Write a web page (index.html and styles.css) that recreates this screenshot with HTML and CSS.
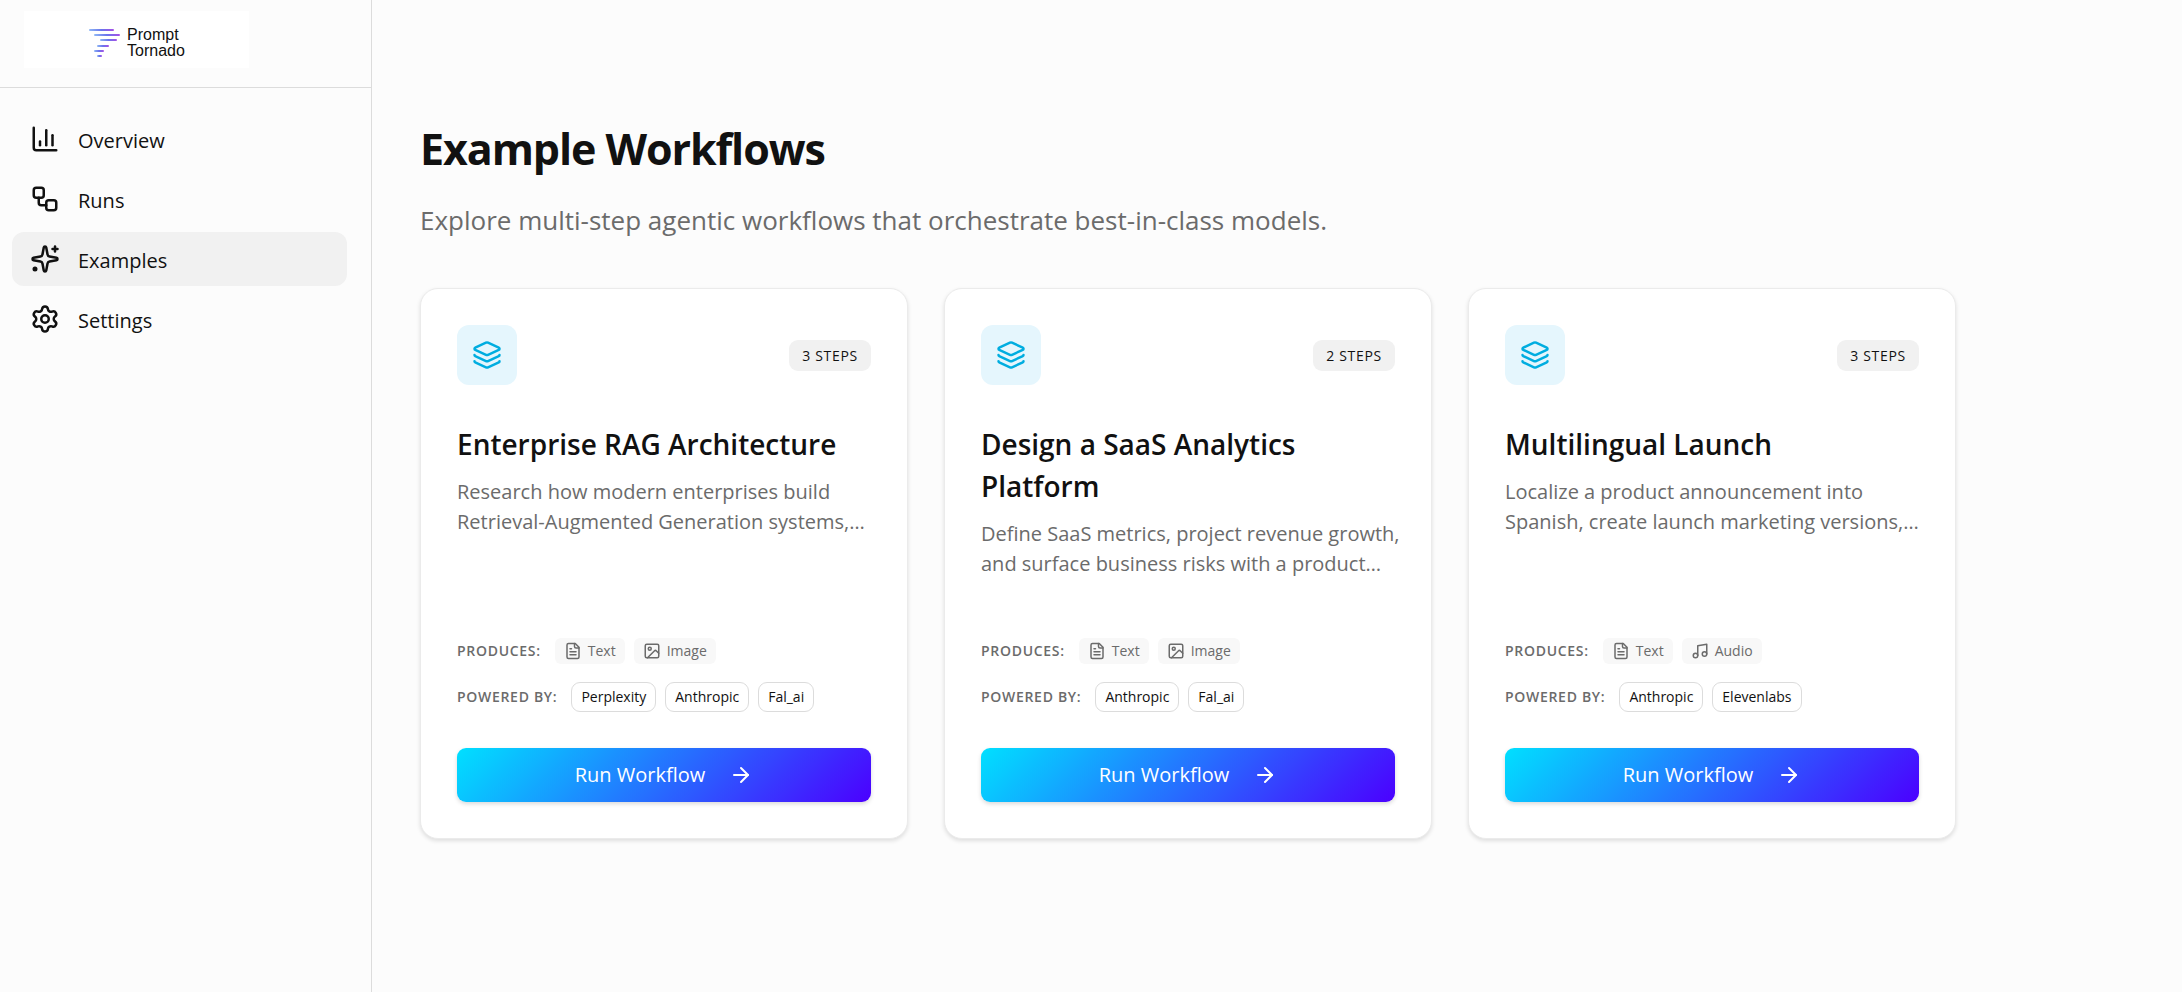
FILE: index.html
```
<!DOCTYPE html>
<html lang="en">
<head>
    <meta charset="UTF-8">
    <meta name="viewport" content="width=device-width, initial-scale=1.0">
    <title>Prompt Tornado - Example Workflows</title>
    <link rel="stylesheet" href="styles.css">
</head>
<body>
    <!-- Icon sprite -->
    <svg class="sprite" aria-hidden="true">
        <symbol id="icon-chart" viewBox="0 0 24 24">
            <path d="M3 3v16a2 2 0 0 0 2 2h16"/>
            <path d="M8 17v-3"/>
            <path d="M13 17V5"/>
            <path d="M18 17V9"/>
        </symbol>
        <symbol id="icon-workflow" viewBox="0 0 24 24">
            <rect width="8" height="8" x="3" y="3" rx="2"/>
            <path d="M7 11v4a2 2 0 0 0 2 2h4"/>
            <rect width="8" height="8" x="13" y="13" rx="2"/>
        </symbol>
        <symbol id="icon-sparkles" viewBox="0 0 24 24">
            <path d="M11.017 2.814a1 1 0 0 1 1.966 0l1.051 5.558a2 2 0 0 0 1.594 1.594l5.558 1.051a1 1 0 0 1 0 1.966l-5.558 1.051a2 2 0 0 0-1.594 1.594l-1.051 5.558a1 1 0 0 1-1.966 0l-1.051-5.558a2 2 0 0 0-1.594-1.594l-5.558-1.051a1 1 0 0 1 0-1.966l5.558-1.051a2 2 0 0 0 1.594-1.594z"/>
            <path d="M20 2v4"/>
            <path d="M22 4h-4"/>
            <circle cx="4" cy="20" r="1"/>
        </symbol>
        <symbol id="icon-settings" viewBox="0 0 24 24">
            <path d="M9.671 4.136a2.34 2.34 0 0 1 4.659 0 2.34 2.34 0 0 0 3.319 1.915 2.34 2.34 0 0 1 2.33 4.033 2.34 2.34 0 0 0 0 3.831 2.34 2.34 0 0 1-2.33 4.033 2.34 2.34 0 0 0-3.319 1.915 2.34 2.34 0 0 1-4.659 0 2.34 2.34 0 0 0-3.32-1.915 2.34 2.34 0 0 1-2.33-4.033 2.34 2.34 0 0 0 0-3.831A2.34 2.34 0 0 1 6.35 6.051a2.34 2.34 0 0 0 3.319-1.915"/>
            <circle cx="12" cy="12" r="3"/>
        </symbol>
        <symbol id="icon-layers" viewBox="0 0 24 24">
            <path d="M12.83 2.18a2 2 0 0 0-1.66 0L2.6 6.08a1 1 0 0 0 0 1.83l8.58 3.91a2 2 0 0 0 1.66 0l8.58-3.9a1 1 0 0 0 0-1.83z"/>
            <path d="M2 12a1 1 0 0 0 .58.91l8.6 3.91a2 2 0 0 0 1.65 0l8.58-3.9A1 1 0 0 0 22 12"/>
            <path d="M2 17a1 1 0 0 0 .58.91l8.6 3.91a2 2 0 0 0 1.65 0l8.58-3.9A1 1 0 0 0 22 17"/>
        </symbol>
        <symbol id="icon-text" viewBox="0 0 24 24">
            <path d="M15 2H6a2 2 0 0 0-2 2v16a2 2 0 0 0 2 2h12a2 2 0 0 0 2-2V7Z"/>
            <path d="M14 2v4a2 2 0 0 0 2 2h4"/>
            <path d="M10 9H8"/>
            <path d="M16 13H8"/>
            <path d="M16 17H8"/>
        </symbol>
        <symbol id="icon-image" viewBox="0 0 24 24">
            <rect width="18" height="18" x="3" y="3" rx="2"/>
            <circle cx="9" cy="9" r="2"/>
            <path d="m21 15-3.086-3.086a2 2 0 0 0-2.828 0L6 21"/>
        </symbol>
        <symbol id="icon-music" viewBox="0 0 24 24">
            <path d="M9 18V5l12-2v13"/>
            <circle cx="6" cy="18" r="3"/>
            <circle cx="18" cy="16" r="3"/>
        </symbol>
        <symbol id="icon-arrow" viewBox="0 0 24 24">
            <path d="M5 12h14"/>
            <path d="m12 5 7 7-7 7"/>
        </symbol>
    </svg>

    <div class="layout">
        <aside class="sidebar">
            <div class="sidebar-header">
                <a class="logo" href="#">
                    <svg class="logo-mark" viewBox="0 0 32 30" aria-hidden="true">
                        <defs>
                            <linearGradient id="wind">
                                <stop offset="0" stop-color="#8fb8f5"/>
                                <stop offset="0.5" stop-color="#6a74ec"/>
                                <stop offset="1" stop-color="#a64fe6"/>
                            </linearGradient>
                        </defs>
                        <g fill="url(#wind)">
                            <rect x="1" y="1" width="25" height="2" rx="1"/>
                            <rect x="6" y="6" width="26" height="2" rx="1"/>
                            <rect x="12" y="11" width="17" height="2" rx="1"/>
                            <rect x="9" y="17" width="12" height="2" rx="1"/>
                            <rect x="6" y="22" width="10" height="2" rx="1"/>
                            <rect x="9" y="27" width="5" height="2" rx="1"/>
                        </g>
                    </svg>
                    <span class="logo-text">Prompt<br>Tornado</span>
                </a>
            </div>
            <nav class="nav">
                <a class="nav-item" href="#">
                    <svg class="icon"><use href="#icon-chart"/></svg>
                    <span>Overview</span>
                </a>
                <a class="nav-item" href="#">
                    <svg class="icon"><use href="#icon-workflow"/></svg>
                    <span>Runs</span>
                </a>
                <a class="nav-item active" href="#" aria-current="page">
                    <svg class="icon"><use href="#icon-sparkles"/></svg>
                    <span>Examples</span>
                </a>
                <a class="nav-item" href="#">
                    <svg class="icon"><use href="#icon-settings"/></svg>
                    <span>Settings</span>
                </a>
            </nav>
        </aside>

        <main class="main">
            <div class="content">
                <h1>Example Workflows</h1>
                <p class="subtitle">Explore multi-step agentic workflows that orchestrate best-in-class models.</p>

                <div class="cards">
                    <article class="card">
                        <div class="card-top">
                            <span class="card-icon"><svg class="icon"><use href="#icon-layers"/></svg></span>
                            <span class="steps">3 Steps</span>
                        </div>
                        <h2>Enterprise RAG Architecture</h2>
                        <p class="description">Research how modern enterprises build<br>Retrieval-Augmented Generation systems,…</p>
                        <div class="meta">
                            <div class="meta-row">
                                <span class="meta-label">Produces:</span>
                                <span class="output"><svg class="icon"><use href="#icon-text"/></svg>Text</span>
                                <span class="output"><svg class="icon"><use href="#icon-image"/></svg>Image</span>
                            </div>
                            <div class="meta-row">
                                <span class="meta-label">Powered by:</span>
                                <span class="provider">Perplexity</span>
                                <span class="provider">Anthropic</span>
                                <span class="provider">Fal_ai</span>
                            </div>
                        </div>
                        <button class="run" type="button">Run Workflow <svg class="icon"><use href="#icon-arrow"/></svg></button>
                    </article>

                    <article class="card">
                        <div class="card-top">
                            <span class="card-icon"><svg class="icon"><use href="#icon-layers"/></svg></span>
                            <span class="steps">2 Steps</span>
                        </div>
                        <h2>Design a SaaS Analytics Platform</h2>
                        <p class="description">Define SaaS metrics, project revenue growth,<br>and surface business risks with a product…</p>
                        <div class="meta">
                            <div class="meta-row">
                                <span class="meta-label">Produces:</span>
                                <span class="output"><svg class="icon"><use href="#icon-text"/></svg>Text</span>
                                <span class="output"><svg class="icon"><use href="#icon-image"/></svg>Image</span>
                            </div>
                            <div class="meta-row">
                                <span class="meta-label">Powered by:</span>
                                <span class="provider">Anthropic</span>
                                <span class="provider">Fal_ai</span>
                            </div>
                        </div>
                        <button class="run" type="button">Run Workflow <svg class="icon"><use href="#icon-arrow"/></svg></button>
                    </article>

                    <article class="card">
                        <div class="card-top">
                            <span class="card-icon"><svg class="icon"><use href="#icon-layers"/></svg></span>
                            <span class="steps">3 Steps</span>
                        </div>
                        <h2>Multilingual Launch</h2>
                        <p class="description">Localize a product announcement into<br>Spanish, create launch marketing versions,…</p>
                        <div class="meta">
                            <div class="meta-row">
                                <span class="meta-label">Produces:</span>
                                <span class="output"><svg class="icon"><use href="#icon-text"/></svg>Text</span>
                                <span class="output"><svg class="icon"><use href="#icon-music"/></svg>Audio</span>
                            </div>
                            <div class="meta-row">
                                <span class="meta-label">Powered by:</span>
                                <span class="provider">Anthropic</span>
                                <span class="provider">Elevenlabs</span>
                            </div>
                        </div>
                        <button class="run" type="button">Run Workflow <svg class="icon"><use href="#icon-arrow"/></svg></button>
                    </article>
                </div>
            </div>
        </main>
    </div>
</body>
</html>
```
FILE: styles.css
```
* {
    box-sizing: border-box;
}

body {
    margin: 0;
    background: #fcfcfc;
    color: #111;
    font-family: 'Open Sans', 'Noto Sans', sans-serif;
    font-size: 20px;
    line-height: 30px;
}

h1, h2, p {
    margin: 0;
}

a {
    color: inherit;
    text-decoration: none;
}

.sprite {
    display: none;
}

.icon {
    width: 30px;
    height: 30px;
    flex-shrink: 0;
    fill: none;
    stroke: currentColor;
    stroke-width: 2;
    stroke-linecap: round;
    stroke-linejoin: round;
}

.layout {
    display: flex;
    min-height: 100vh;
}

/* Sidebar */
.sidebar {
    width: 372px;
    flex-shrink: 0;
    border-right: 1px solid #dcdcdc;
}

.sidebar-header {
    padding: 11px 24px 19px;
    border-bottom: 1px solid #dcdcdc;
}

.logo {
    display: flex;
    align-items: center;
    justify-content: center;
    gap: 7px;
    width: 225px;
    height: 57px;
    padding-top: 6px;
    background: #fff;
}

.logo-mark {
    width: 32px;
    height: 30px;
}

.logo-text {
    font-family: 'Liberation Sans', Arial, sans-serif;
    font-size: 16px;
    line-height: 16px;
}

.nav {
    display: flex;
    flex-direction: column;
    gap: 6px;
    padding: 24px 24px 24px 12px;
}

.nav-item {
    display: flex;
    align-items: center;
    gap: 18px;
    padding: 12px 18px;
    border-radius: 12px;
}

.nav-item span {
    padding-top: 4px;
    line-height: 26px;
}

.nav-item.active {
    background: #f1f1f1;
}

/* Main area */
.main {
    flex: 1;
    padding: 122px 48px 48px;
}

.content {
    max-width: 1536px;
}

h1 {
    font-size: 43px;
    font-weight: 700;
    line-height: 54px;
    letter-spacing: -0.025em;
}

.subtitle {
    margin-top: 23px;
    color: #6b6b6b;
    font-size: 26px;
    line-height: 42px;
}

.cards {
    display: grid;
    grid-template-columns: repeat(3, minmax(0, 1fr));
    gap: 36px;
    margin-top: 47px;
}

.card {
    display: flex;
    flex-direction: column;
    padding: 36px;
    background: #fff;
    border: 1px solid #ebebeb;
    border-radius: 18px;
    box-shadow: 0 2px 4px rgba(0, 0, 0, 0.12);
}

.card-top {
    display: flex;
    align-items: center;
    justify-content: space-between;
    margin-bottom: 38px;
}

.card-icon {
    display: flex;
    align-items: center;
    justify-content: center;
    width: 60px;
    height: 60px;
    border-radius: 12px;
    background: #e5f6fd;
    color: #00ade0;
}

.steps {
    padding: 4px 13px;
    border-radius: 9px;
    background: #f1f1f1;
    font-size: 14px;
    line-height: 23px;
    letter-spacing: 0.05em;
    text-transform: uppercase;
}

h2 {
    font-size: 28px;
    font-weight: 600;
    line-height: 42px;
}

.description {
    margin-top: 12px;
    margin-bottom: 59px;
    color: #6b6b6b;
    white-space: nowrap;
}

.meta {
    display: flex;
    flex-direction: column;
    gap: 18px;
    margin-top: auto;
    font-size: 14px;
}

.meta-row {
    display: flex;
    align-items: center;
    gap: 9px;
}

.meta-label {
    margin-right: 5px;
    color: #6b6b6b;
    font-weight: 600;
    line-height: 24px;
    letter-spacing: 0.05em;
    text-transform: uppercase;
}

.output {
    display: flex;
    align-items: center;
    gap: 6px;
    padding: 0 9px;
    border-radius: 6px;
    background: #f8f8f8;
    color: #6b6b6b;
    line-height: 26px;
}

.output .icon {
    width: 18px;
    height: 18px;
}

.provider {
    padding: 0 9px;
    border: 1px solid #dcdcdc;
    border-radius: 9px;
    line-height: 28px;
}

.run {
    display: flex;
    align-items: center;
    justify-content: center;
    gap: 24px;
    height: 54px;
    margin-top: 36px;
    padding: 0 24px;
    border: none;
    border-radius: 9px;
    background: linear-gradient(135deg, #00e0ff, #4b00ff);
    box-shadow: 0 2px 4px rgba(0, 0, 0, 0.15);
    color: #fff;
    font: inherit;
    cursor: pointer;
}

.run .icon {
    width: 24px;
    height: 24px;
}
```
